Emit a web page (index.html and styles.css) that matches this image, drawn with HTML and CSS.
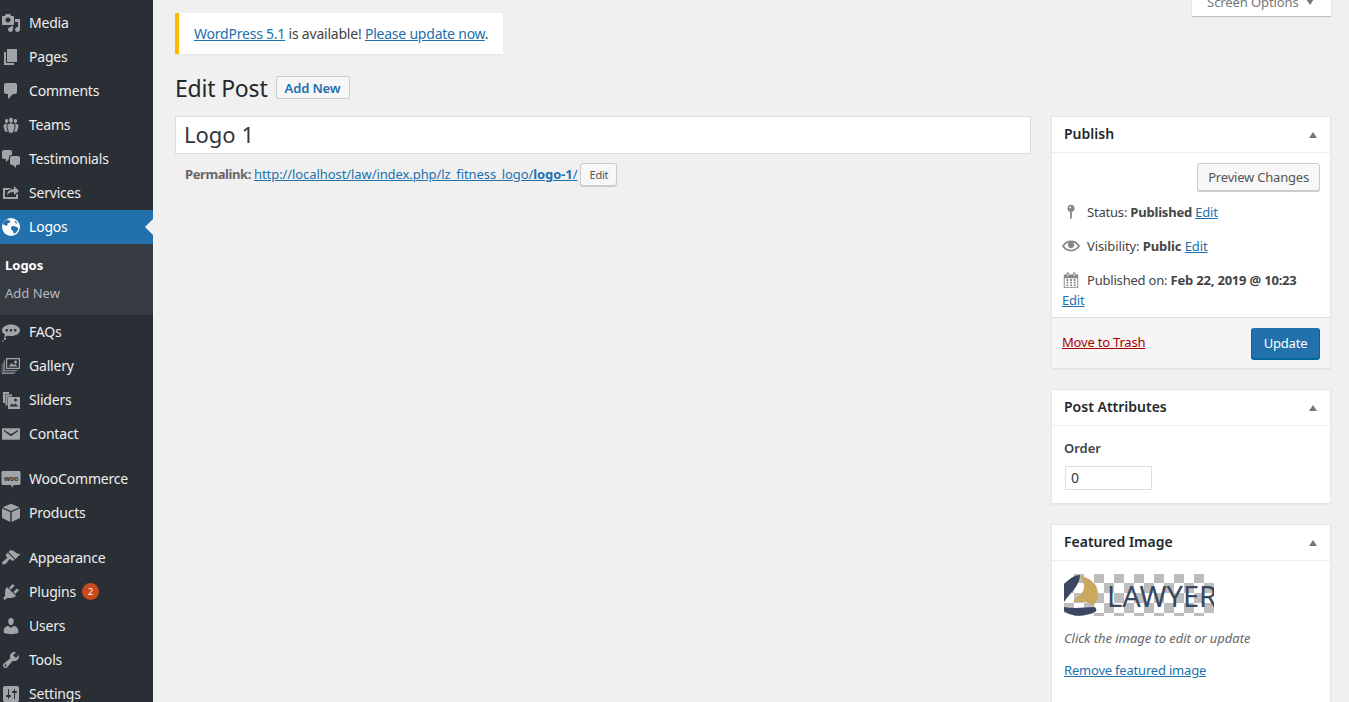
FILE: index.html
```html
<!DOCTYPE html>
<html lang="en">
<head>
    <meta charset="UTF-8">
    <title>Edit Post</title>
    <link rel="stylesheet" href="styles.css">
</head>
<body>
    <div class="wrap">
        <!-- Admin menu -->
        <nav class="menu">
            <a class="item"><svg viewBox="0 0 20 20"><path d="M13 11V4c0-.55-.45-1-1-1h-1.67L9 1H5L3.67 3H2c-.55 0-1 .45-1 1v7c0 .55.45 1 1 1h10c.55 0 1-.45 1-1zM7 4.5c1.38 0 2.5 1.12 2.5 2.5S8.38 9.5 7 9.5 4.5 8.38 4.5 7 5.62 4.5 7 4.5zM14 6h5v10.5c0 1.38-1.12 2.5-2.5 2.5S14 17.88 14 16.5s1.12-2.5 2.5-2.5c.17 0 .34.02.5.05V9h-3V6zm-4 8.05V13h2v3.5c0 1.38-1.12 2.5-2.5 2.5S7 17.88 7 16.5 8.12 14 9.5 14c.17 0 .34.02.5.05z"/></svg>Media</a>
            <a class="item"><svg viewBox="0 0 20 20"><path d="M6 15V2h10v13H6zm-1 1h8v2H3V5h2v11z"/></svg>Pages</a>
            <a class="item"><svg viewBox="0 0 20 20"><path d="M5 2h9c1.1 0 2 .9 2 2v7c0 1.1-.9 2-2 2h-2l-5 5v-5H5c-1.1 0-2-.9-2-2V4c0-1.1.9-2 2-2z"/></svg>Comments</a>
            <a class="item"><svg viewBox="0 0 20 20"><path d="M8.03 4.46c-.29 1.28.55 3.46 1.97 3.46 1.41 0 2.25-2.18 1.96-3.46-.22-.98-1.08-1.63-1.96-1.63-.89 0-1.74.65-1.97 1.63zm-4.13.9c-.25 1.08.47 2.93 1.67 2.93s1.92-1.85 1.67-2.93c-.19-.83-.92-1.39-1.67-1.39s-1.48.56-1.67 1.39zm8.86 0c-.25 1.08.47 2.93 1.66 2.93 1.2 0 1.92-1.85 1.67-2.93-.19-.83-.92-1.39-1.67-1.39-.74 0-1.47.56-1.66 1.39zm-.59 11.43l1.25-4.3C14.2 10 12.71 8.47 10 8.47c-2.72 0-4.21 1.53-3.44 4.02l1.26 4.3C8.05 17.51 9 18 10 18c.98 0 1.94-.49 2.17-1.21zm-6.1-7.63c-.49.67-.96 1.83-.42 3.59l1.12 3.79c-.34.2-.77.31-1.2.31-.85 0-1.65-.41-1.85-1.03l-1.07-3.65c-.65-2.11.61-3.4 2.92-3.4.27 0 .54.02.79.06-.1.1-.2.22-.29.33zm8.35-.39c2.31 0 3.58 1.29 2.92 3.4l-1.07 3.65c-.2.62-1 1.03-1.85 1.03-.43 0-.86-.11-1.2-.31l1.11-3.77c.55-1.78.08-2.94-.42-3.61-.08-.11-.18-.23-.28-.33.25-.04.51-.06.79-.06z"/></svg>Teams</a>
            <a class="item"><svg viewBox="0 0 20 20"><path d="M11 6h-.82C9.07 6 8 7.2 8 8.16V10l-3 3v-3H3c-1.1 0-2-.9-2-2V3c0-1.1.9-2 2-2h6c1.1 0 2 .9 2 2v3zm0 1h6c1.1 0 2 .9 2 2v5c0 1.1-.9 2-2 2h-2v3l-3-3h-1c-1.1 0-2-.9-2-2V9c0-1.1.9-2 2-2z"/></svg>Testimonials</a>
            <a class="item"><svg viewBox="0 0 20 20"><path d="M18 8l-5 4V9.01c-2.58.06-4.88.45-7 2.99.29-3.57 2.66-5.66 7-5.94V3zM4 14h11v-2l2-1.6V16H2V5h9.43c-1.83.32-3.31 1-4.41 2H4v7z"/></svg>Services</a>
            <a class="item current"><svg viewBox="0 0 20 20"><circle cx="10" cy="10" r="9"/><path class="land" d="M6 2.6c1 .5 2.2.7 3 1.5.5.6.1 1.3-.5 1.6-.7.4-1.6.2-2 .9-.3.6.3 1.1 0 1.7-.4.6-1.4.5-2 .1-.8-.5-1.6-1-2.6-1 .3-2 1.6-3.800 4.100-4.800zM11 9.300c1-.5 2.300-.2 3.300.2.9.4 1.900.6 2.700 1.400.3.300.3.7.2 1.100-.7 2.200-2.200 3.900-4.200 4.800-.6-.5-.6-1.300-.7-2-.2-.9-1-1.300-1.700-1.800-.8-.7-.9-2.800.4-3.700zM14 3.800c1 .6 1.900 1.500 2.400 2.600-.8.200-1.700 0-2.200-.6-.4-.6-.4-1.400-.2-2z"/></svg>Logos</a>
            <div class="submenu">
                <a class="sub sub-current">Logos</a>
                <a class="sub">Add New</a>
            </div>
            <a class="item"><svg viewBox="0 0 20 20"><path d="M10 2.500c5 0 9 2.500 9 5.800s-4 5.800-9 5.800c-1.200 0-2.300-.1-3.400-.4C5.200 14.800 3.800 14.800 3 14.500c.6-.5 1-1.100 1.100-1.900C2.200 11.500 1 10 1 8.300c0-3.300 4-5.800 9-5.800zM5.800 7a1.300 1.300 0 1 0 0 2.600 1.300 1.300 0 0 0 0-2.600zm4.200 0a1.300 1.300 0 1 0 0 2.600A1.300 1.300 0 0 0 10 7zm4.200 0a1.300 1.300 0 1 0 0 2.600 1.300 1.300 0 0 0 0-2.600zM4 15.500a1.200 1.200 0 1 1 0 2.400 1.200 1.200 0 0 1 0-2.400zM2 18.200a.8.8 0 1 1 0 1.600.8.8 0 0 1 0-1.600z"/></svg>FAQs</a>
            <a class="item"><svg viewBox="0 0 20 20"><path fill-rule="evenodd" d="M5 2h14v11H5zM6.200 3.200v8.600h11.600V3.200zM7.500 10.500l3-3.500 2 2 1.500-1 2.500 2.500zM14.500 4.500a1.500 1.500 0 1 1 0 3 1.500 1.500 0 0 1 0-3z"/><path d="M3.300 4H4v10.200h12.500v.8H3.300zM2 6h.6v9.700h12v.8H2zM.8 8h.6v9h12v.8H.8z"/></svg>Gallery</a>
            <a class="item"><svg viewBox="0 0 20 20"><path d="M2 2h6v2H4v9H2zM4.500 4.500H11v2H6.500v9h-2z"/><path fill-rule="evenodd" d="M7 7h12v12H7zM14.500 8.500a1.500 1.500 0 1 0 0 3 1.500 1.500 0 0 0 0-3zM8.500 16.500h9l-3-3-2 1.500-1.500-1.500z"/></svg>Sliders</a>
            <a class="item"><svg viewBox="0 0 20 20"><path d="M1.500 4.200h17c.3 0 .5.2.5.500v10.600c0 .3-.2.5-.5.500h-17c-.3 0-.5-.2-.5-.500V4.700c0-.3.200-.5.500-.5zM3.300 6l-.8.800L10 12.300l7.500-5.500-.8-.8L10 10.200z" fill-rule="evenodd"/></svg>Contact</a>
            <a class="item gap"><svg viewBox="0 0 20 20"><path d="M2 2h16c.9 0 1.500.6 1.500 1.500v11c0 .9-.6 1.500-1.500 1.500h-5l-2 2.500L10 16H2c-.9 0-1.500-.6-1.500-1.500v-11C.5 2.600 1.100 2 2 2z"/><text class="woo" x="10" y="11.500">woo</text></svg>WooCommerce</a>
            <a class="item"><svg viewBox="0 0 20 20"><path d="M10 .8l8.500 3.500L10 8 1.500 4.300zM1 5.500l8.300 3.600v10L1 15zM19 5.500v9.500l-8.300 4.100V9.100z"/></svg>Products</a>
            <a class="item gap"><svg viewBox="0 0 20 20"><path d="M14.480 11.060L7.410 3.990l1.500-1.500c.5-.56 2.300-.47 3.510.32 1.210.8 1.430 1.280 2.910 2.100 1.180.64 2.450 1.260 4.450.85zm-.71.71L6.700 4.700 4.930 6.470c-.39.39-.39 1.020 0 1.410l1.060 1.060c.39.39.39 1.030 0 1.420-.6.6-1.430 1.110-2.210 1.690-.35.26-.7.53-1.010.84C1.430 13.230.91 14.240 1.100 15.100c-.08.45.93 1.460 1.380 1.380.86.19 1.870-.33 3.240-1.700.31-.31.58-.66.84-1.010.58-.78 1.090-1.610 1.690-2.210.39-.39 1.030-.39 1.420 0L11 12.620c.39.39 1.020.39 1.410 0z"/></svg>Appearance</a>
            <a class="item"><svg viewBox="0 0 20 20"><path d="M13.110 4.360L9.870 7.600 8 5.730l3.240-3.240c.35-.34 1.050-.2 1.560.32.52.51.66 1.210.31 1.550zm-8 1.770l.91-1.120 9.010 9.010-1.190.84c-.71.71-2.630 1.160-3.820 1.160H6.140L4.900 17.260c-.59.59-1.540.59-2.120 0-.59-.58-.59-1.530 0-2.120l1.240-1.240v-3.880c0-1.130.4-3.190 1.090-3.890zm7.260 3.970l3.240-3.240c.34-.35 1.040-.21 1.550.31.52.51.66 1.210.31 1.550l-3.240 3.250z"/></svg>Plugins<span class="badge">2</span></a>
            <a class="item"><svg viewBox="0 0 20 20"><path d="M10 9.250c-2.270 0-2.730-3.440-2.730-3.440C7 4.020 7.820 2 9.970 2c2.160 0 2.980 2.020 2.710 3.810 0 0-.41 3.440-2.680 3.440zm0 2.570L12.720 10c2.390 0 4.520 2.330 4.520 4.530v2.490s-3.650 1.130-7.240 1.130c-3.650 0-7.240-1.130-7.240-1.130v-2.490c0-2.250 1.940-4.480 4.470-4.480z"/></svg>Users</a>
            <a class="item"><svg viewBox="0 0 20 20"><path d="M16.680 9.770c-1.340 1.340-3.300 1.670-4.950.99l-5.410 6.520c-.99.99-2.590.99-3.580 0s-.99-2.590 0-3.570l6.520-5.420c-.68-1.650-.35-3.610.99-4.950 1.280-1.280 3.120-1.620 4.720-1.060l-2.890 2.890 2.820 2.820 2.860-2.870c.53 1.580.18 3.390-1.080 4.650zM3.810 16.210c.4.39 1.040.39 1.430 0 .4-.4.4-1.040 0-1.430-.39-.4-1.030-.4-1.430 0-.39.39-.39 1.030 0 1.430z"/></svg>Tools</a>
            <a class="item"><svg viewBox="0 0 20 20"><path d="M18 16V4c0-1.100-.9-2-2-2H4c-1.100 0-2 .9-2 2v12c0 1.100.9 2 2 2h12c1.100 0 2-.9 2-2zM8 11h1c.55 0 1 .45 1 1s-.45 1-1 1H8v1.500c0 .28-.22.5-.5.5s-.5-.22-.5-.5V13H6c-.55 0-1-.45-1-1s.45-1 1-1h1V5.500c0-.28.22-.5.5-.5s.5.22.5.5V11zm5-2h-1c-.55 0-1-.45-1-1s.45-1 1-1h1V5.500c0-.28.22-.5.5-.5s.5.22.5.5V7h1c.55 0 1 .45 1 1s-.45 1-1 1h-1v5.500c0 .28-.22.5-.5.5s-.5-.22-.5-.5V9z"/></svg>Settings</a>
        </nav>

        <main class="content">
            <button class="screen-options">Screen Options <span class="arrow-down"></span></button>

            <div class="notice"><a href="#">WordPress 5.1</a> is available! <a href="#">Please update now</a>.</div>

            <div class="heading">
                <h1>Edit Post</h1>
                <a class="add-new">Add New</a>
            </div>

            <div class="columns">
                <!-- Title and permalink -->
                <div class="post-body">
                    <input class="title" type="text" value="Logo 1">
                    <div class="permalink">
                        <b class="permalink-label">Permalink:</b>
                        <a href="#">http://localhost/law/index.php/lz_fitness_logo/<b>logo-1</b>/</a>
                        <button class="btn small">Edit</button>
                    </div>
                </div>

                <!-- Right hand boxes -->
                <div class="side">
                    <section class="box">
                        <h2>Publish<span class="arrow-up"></span></h2>
                        <div class="publish-main">
                            <div class="preview"><button class="btn">Preview Changes</button></div>
                            <div class="row"><svg viewBox="0 0 20 20"><path d="M14 6c0 1.860-1.280 3.410-3 3.860V16c0 1-2 2-2 2V9.860c-1.720-.45-3-2-3-3.860 0-2.210 1.790-4 4-4s4 1.790 4 4zM8 5c0 .55.45 1 1 1s1-.45 1-1-.45-1-1-1-1 .45-1 1z"/></svg><span>Status: <b>Published</b> <a href="#">Edit</a></span></div>
                            <div class="row"><svg viewBox="0 0 20 20"><path d="M19.700 9.400C17.700 6 14 3.900 10 3.900S2.300 6 .3 9.400L0 10l.3.6c2 3.400 5.700 5.500 9.700 5.500s7.700-2.100 9.700-5.500l.3-.6-.3-.6zM10 14.100c-3.100 0-6-1.600-7.700-4.100C3.600 8 5.700 6.600 8 6.100c-.9.6-1.500 1.700-1.500 2.900 0 1.900 1.600 3.500 3.500 3.500s3.500-1.600 3.500-3.500c0-1.200-.6-2.300-1.500-2.900 2.300.5 4.400 1.900 5.700 3.900-1.700 2.500-4.600 4.100-7.700 4.100z"/></svg><span class="visibility">Visibility: <b>Public</b> <a href="#">Edit</a></span></div>
                            <div class="row"><svg viewBox="0 0 20 20"><path d="M15 4h3v15H2V4h3V3c0-.41.15-.76.44-1.060.29-.29.65-.44 1.060-.44s.77.15 1.060.44c.29.3.44.65.44 1.060v1h4V3c0-.41.15-.76.44-1.060.29-.29.65-.44 1.060-.44s.77.15 1.060.44c.29.3.44.65.44 1.060v1zM6 3v2.500c0 .14.05.26.15.36.09.09.21.14.35.14s.26-.05.35-.14c.1-.1.15-.22.15-.36V3c0-.14-.05-.26-.15-.35-.09-.1-.21-.15-.35-.15s-.26.05-.35.15c-.1.09-.15.21-.15.35zm7 0v2.500c0 .14.05.26.14.36.1.09.22.14.36.14s.26-.05.36-.14c.09-.1.14-.22.14-.36V3c0-.14-.05-.26-.14-.35-.1-.1-.22-.15-.36-.15s-.26.05-.36.15c-.09.09-.14.21-.14.35zm4 15V8H3v10h14zM7 9v2H5V9h2zm2 0h2v2H9V9zm4 2V9h2v2h-2zm-6 1v2H5v-2h2zm2 0h2v2H9v-2zm4 2v-2h2v2h-2zm-6 1v2H5v-2h2zm4 2H9v-2h2v2zm4 0h-2v-2h2v2z"/></svg><span>Published on: <b>Feb 22, 2019 @ 10:23</b></span></div>
                            <a class="date-edit" href="#">Edit</a>
                        </div>
                        <div class="publish-actions">
                            <a class="trash" href="#">Move to Trash</a>
                            <button class="btn primary">Update</button>
                        </div>
                    </section>

                    <section class="box">
                        <h2>Post Attributes<span class="arrow-up"></span></h2>
                        <div class="inside">
                            <p class="label">Order</p>
                            <input class="order" type="text" value="0">
                        </div>
                    </section>

                    <section class="box">
                        <h2>Featured Image<span class="arrow-up"></span></h2>
                        <div class="inside">
                            <div class="thumb">
                                <svg viewBox="0 0 42 42"><path class="logo-dark" d="M16 1C10 1 4 6 0 10v18C5 20 16 12 16 1zM0 33c10 2 22 0 30 0 3 1 3 4 1 5-7 4-23 6-31-1z"/><path class="logo-gold" d="M16 2c10 1 18 9 18 17 0 6-2 10-5 13-3-4-11-5-20-4 4-6 11-8 11-15 0-4-2-8-4-11z"/></svg>
                                <span class="lawyer">LAWYER</span>
                            </div>
                            <p class="hint">Click the image to edit or update</p>
                            <a class="remove" href="#">Remove featured image</a>
                        </div>
                    </section>
                </div>
            </div>
        </main>
    </div>
</body>
</html>
```

FILE: styles.css
```css
* {
    box-sizing: border-box;
}

html, body {
    margin: 0;
    height: 702px;
    overflow: hidden;
}

body {
    background: #f0f0f0;
    color: #444;
    font-family: "Noto Sans", sans-serif;
    font-size: 13px;
}

a {
    color: #2271ad;
}

.wrap {
    display: flex;
    height: 702px;
}

/* Admin menu */
.menu {
    width: 153px;
    flex-shrink: 0;
    padding-top: 6px;
    background: #2a2e35;
}

.item {
    display: flex;
    align-items: center;
    height: 34px;
    padding: 0 0 2px 1px;
    color: #eee;
    font-size: 14px;
    letter-spacing: -.2px;
    position: relative;
}

.item svg {
    width: 20px;
    height: 20px;
    margin: 2px 8px 0 0;
    fill: #a0a5aa;
}

.gap {
    margin-top: 11px;
}

.current {
    background: #2271ad;
    color: #fff;
}

.current svg {
    fill: #fff;
}

.current .land {
    fill: #2271ad;
}

.current::after {
    content: "";
    position: absolute;
    right: 0;
    top: 9px;
    border: 8px solid transparent;
    border-right-color: #f0f0f0;
    border-left-width: 0;
}

.woo {
    fill: #2a2e35;
    font-size: 7px;
    font-weight: 700;
    text-anchor: middle;
}

.submenu {
    height: 71px;
    padding-top: 7px;
    background: #373c42;
}

.sub {
    display: block;
    height: 28px;
    line-height: 28px;
    padding-left: 5px;
    color: #b4b9be;
    font-size: 13px;
}

.sub-current {
    color: #fff;
    font-weight: 700;
}

.badge {
    width: 17px;
    height: 17px;
    margin-left: 6px;
    border-radius: 50%;
    background: #ca4a1f;
    color: #fff;
    font-size: 9px;
    line-height: 17px;
    text-align: center;
}

/* Main area */
.content {
    position: relative;
    flex: 1;
    padding: 13px 18px 0 22px;
}

.screen-options {
    position: absolute;
    top: -11px;
    right: 18px;
    width: 139px;
    height: 27px;
    padding: 0 2px 2px 0;
    border: 0;
    background: #fff;
    box-shadow: 0 1px 1px rgba(0, 0, 0, .2);
    color: #72777c;
    font: 13px "Noto Sans", sans-serif;
    letter-spacing: -.1px;
}

.arrow-down {
    display: inline-block;
    margin-left: 4px;
    border: 4px solid transparent;
    border-top: 6px solid #72777c;
    border-bottom: 0;
    vertical-align: 2px;
}

.notice {
    width: 328px;
    height: 41px;
    padding-left: 15px;
    border-left: 4px solid #ffb900;
    background: #fff;
    box-shadow: 0 1px 1px rgba(0, 0, 0, .04);
    font-size: 14px;
    letter-spacing: -.22px;
    line-height: 41px;
    white-space: nowrap;
}

.heading {
    display: flex;
    align-items: center;
    height: 46px;
    margin-top: 10px;
}

h1 {
    margin: 2px 8px 0 0;
    color: #23282d;
    font-size: 23px;
    font-weight: 400;
    letter-spacing: -.2px;
}

.add-new {
    width: 74px;
    height: 23px;
    border: 1px solid #ccc;
    border-radius: 2px;
    background: #f7f7f7;
    color: #2271ad;
    font-size: 13px;
    font-weight: 600;
    letter-spacing: -.15px;
    line-height: 22px;
    text-align: center;
}

.columns {
    display: flex;
    gap: 20px;
    margin-top: 6px;
}

.post-body {
    width: 856px;
}

.title {
    display: block;
    width: 100%;
    height: 38px;
    padding: 0 8px 2px;
    border: 1px solid #ddd;
    background: #fff;
    color: #32373c;
    font: 22px "Noto Sans", sans-serif;
}

.permalink {
    display: flex;
    align-items: center;
    gap: 3px;
    height: 24px;
    margin-top: 8px;
    padding-left: 10px;
    color: #666;
    white-space: nowrap;
}

.permalink-label {
    letter-spacing: -.4px;
}

.permalink a {
    letter-spacing: -.08px;
}

.btn {
    height: 28px;
    padding: 0 10px;
    border: 1px solid #ccc;
    border-radius: 3px;
    background: #f7f7f7;
    box-shadow: 0 1px 0 #ccc;
    color: #555;
    font: 13px "Noto Sans", sans-serif;
    letter-spacing: -.2px;
}

.small {
    height: 23px;
    padding: 0 8px;
    font-size: 11px;
}

.primary {
    width: 69px;
    height: 31px;
    padding: 0;
    border-color: #2271ad #006799 #006799;
    background: #2271ad;
    box-shadow: 0 1px 0 #006799;
    color: #fff;
}

.side {
    width: 280px;
}

.box {
    margin-bottom: 20px;
    border: 1px solid #e5e5e5;
    background: #fff;
    box-shadow: 0 1px 1px rgba(0, 0, 0, .04);
}

h2 {
    display: flex;
    align-items: center;
    justify-content: space-between;
    height: 36px;
    margin: 0;
    padding: 0 12px 2px;
    border-bottom: 1px solid #eee;
    color: #23282d;
    font-size: 14px;
    font-weight: 600;
}

.arrow-up {
    margin: 3px 1px 0 0;
    border: 4px solid transparent;
    border-bottom: 6px solid #72777c;
    border-top: 0;
}

.publish-main {
    padding: 10px 10px 8px;
}

.preview {
    display: flex;
    justify-content: flex-end;
    margin-bottom: 4px;
}

.row {
    display: flex;
    align-items: center;
    height: 34px;
    letter-spacing: -.2px;
    white-space: nowrap;
}

.row svg {
    width: 18px;
    height: 18px;
    margin-right: 7px;
    fill: #82878c;
}

.visibility {
    letter-spacing: -.1px;
}

.date-edit {
    display: block;
    margin-top: -6px;
    line-height: 18px;
    letter-spacing: -.2px;
}

.publish-actions {
    display: flex;
    align-items: center;
    justify-content: space-between;
    height: 51px;
    padding: 0 10px;
    border-top: 1px solid #ddd;
    background: #f5f5f5;
}

.trash {
    margin-bottom: 2px;
    color: #a00;
    letter-spacing: -.2px;
}

.inside {
    padding: 13px 12px;
}

.label {
    margin: 0 0 9px;
    font-weight: 600;
}

.order {
    display: block;
    width: 87px;
    height: 24px;
    margin-left: 1px;
    padding: 0 5px 2px;
    border: 1px solid #ddd;
    color: #32373c;
    font: 14px "Noto Sans", sans-serif;
}

/* Transparent logo shown on the editor's checkerboard */
.thumb {
    position: relative;
    display: flex;
    align-items: center;
    width: 150px;
    height: 42px;
    overflow: hidden;
    background: conic-gradient(#bdbdbd 25%, #fff 0 50%, #bdbdbd 0 75%, #fff 0) 0 -1px / 20px 20px;
}

.thumb svg {
    width: 42px;
    height: 42px;
    margin-right: 1px;
    flex-shrink: 0;
}

.logo-dark {
    fill: #3b4660;
}

.logo-gold {
    fill: #c9a95f;
}

.lawyer {
    color: #3b4660;
    font-size: 29px;
    white-space: nowrap;
}

.hint {
    margin: 13px 0 0;
    color: #666;
    font-style: italic;
    letter-spacing: -.05px;
}

.remove {
    display: block;
    margin: 14px 0 30px;
    letter-spacing: -.2px;
}
```
